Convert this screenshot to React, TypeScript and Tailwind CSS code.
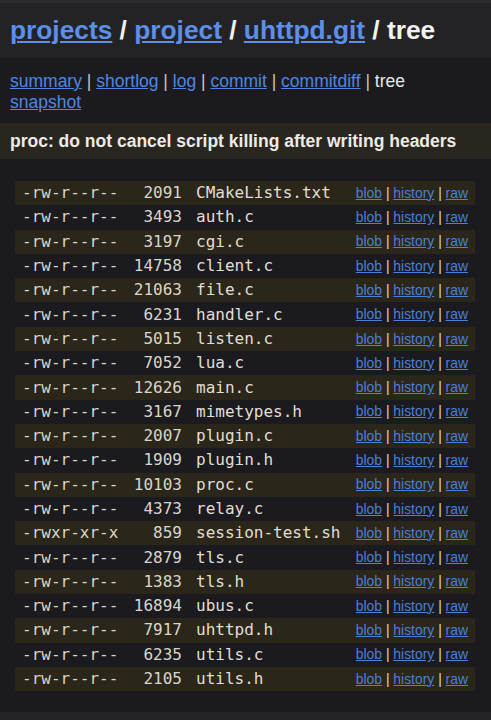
const files: [string, number, string][] = [
  ["-rw-r--r--", 2091, "CMakeLists.txt"],
  ["-rw-r--r--", 3493, "auth.c"],
  ["-rw-r--r--", 3197, "cgi.c"],
  ["-rw-r--r--", 14758, "client.c"],
  ["-rw-r--r--", 21063, "file.c"],
  ["-rw-r--r--", 6231, "handler.c"],
  ["-rw-r--r--", 5015, "listen.c"],
  ["-rw-r--r--", 7052, "lua.c"],
  ["-rw-r--r--", 12626, "main.c"],
  ["-rw-r--r--", 3167, "mimetypes.h"],
  ["-rw-r--r--", 2007, "plugin.c"],
  ["-rw-r--r--", 1909, "plugin.h"],
  ["-rw-r--r--", 10103, "proc.c"],
  ["-rw-r--r--", 4373, "relay.c"],
  ["-rwxr-xr-x", 859, "session-test.sh"],
  ["-rw-r--r--", 2879, "tls.c"],
  ["-rw-r--r--", 1383, "tls.h"],
  ["-rw-r--r--", 16894, "ubus.c"],
  ["-rw-r--r--", 7917, "uhttpd.h"],
  ["-rw-r--r--", 6235, "utils.c"],
  ["-rw-r--r--", 2105, "utils.h"],
]

const navLinks = ["summary", "shortlog", "log", "commit", "commitdiff"]

export default function App() {
  return (
    <div className="min-h-[720px] bg-[#1b1b1f] flex flex-col font-['Liberation_Sans',Arial,sans-serif]">
      <div className="h-[3px] bg-[#2c2c2e]" />
      <div className="h-[55px] bg-[#232325] px-[10px] flex items-center text-[26.3px] font-bold text-[#f2f2f2]">
        <a href="#" className="text-[#5b8fea] underline decoration-2 underline-offset-2">projects</a>
        <span className="whitespace-pre"> / </span>
        <a href="#" className="text-[#5b8fea] underline decoration-2 underline-offset-2">project</a>
        <span className="whitespace-pre"> / </span>
        <a href="#" className="text-[#5b8fea] underline decoration-2 underline-offset-2">uhttpd.git</a>
        <span className="whitespace-pre"> / tree</span>
      </div>

      <div className="px-[10px] pt-[13px] text-[17.5px] leading-[21px] text-[#e8e8e8]">
        {navLinks.map((l) => (
          <span key={l}>
            <a href="#" className="text-[#4f87e2] underline">{l}</a>
            <span className="text-[#c8c4bc]"> | </span>
          </span>
        ))}
        <span>tree</span>
        <br />
        <a href="#" className="text-[#4f87e2] underline">snapshot</a>
      </div>

      <div className="mt-[10px] h-[36px] bg-[#29261f] px-[10px] flex items-center text-[17.5px] font-bold text-[#ecebe6]">
        proc: do not cancel script killing after writing headers
      </div>

      <div className="mt-[22px] ml-[15px] mr-[16px] flex flex-col">
        {files.map(([mode, size, name], i) => (
          <div
            key={name}
            className={`h-[24.3px] flex items-center pl-[7px] pr-[7px] ${i % 2 === 0 ? "bg-[#2a2619]" : ""}`}
          >
            <span className="w-[96px] font-['DejaVu_Sans_Mono',monospace] text-[16px] text-[#d9d5ca] whitespace-pre">{mode}</span>
            <span className="w-[64px] text-right font-['DejaVu_Sans_Mono',monospace] text-[16px] text-[#d9d5ca]">{size}</span>
            <span className="flex-1 pl-[14px] font-['DejaVu_Sans_Mono',monospace] text-[16px] text-[#e2ded3]">{name}</span>
            <span className="text-[13.9px] text-[#dedad2] whitespace-pre">
              <a href="#" className="text-[#4a80d8] underline">blob</a> | <a href="#" className="text-[#4a80d8] underline">history</a> | <a href="#" className="text-[#4a80d8] underline">raw</a>
            </span>
          </div>
        ))}
      </div>

      <div className="flex-1" />
      <div className="h-[8px] bg-[#242428]" />
    </div>
  )
}
